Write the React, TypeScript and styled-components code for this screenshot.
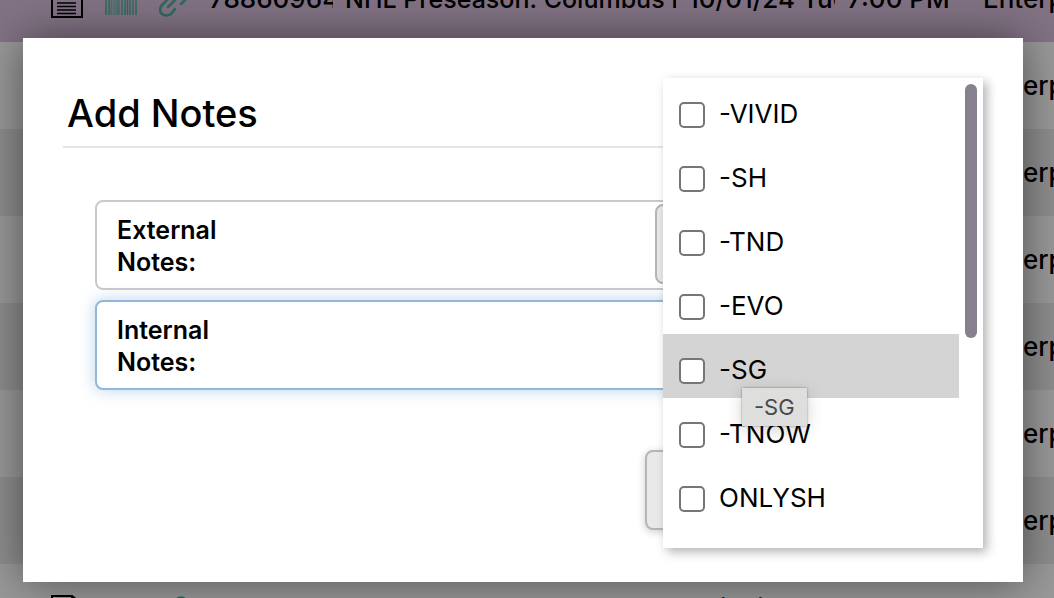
import React from "react";
import styled, { createGlobalStyle, css } from "styled-components";

const Global = createGlobalStyle`
  *, *::before, *::after { box-sizing: border-box; }
  body { margin: 0; background: #999; color: #000; font-family: Inter, "Noto Sans", sans-serif; font-size: 26px; line-height: 32px; overflow: hidden; }
  button, textarea { font: inherit; color: inherit; }
`;

const Page = styled.div`
  position: relative;
  height: 100vh;
  overflow: hidden;
`;

const Orders = styled.table`
  width: 100%;
  min-width: 1054px;
  margin-top: -45px;
  table-layout: fixed;
  border-collapse: collapse;
`;

const OrderRow = styled.tr<{ $selected?: boolean }>`
  height: 87px;
  background: ${(p) => (p.$selected ? "#827384" : "#999")};
  ${(p) => !p.$selected && css`&:nth-child(odd) { background: #8e8e8e; }`}
`;

const Cell = styled.td<{ $width?: number; $small?: boolean }>`
  width: ${(p) => (p.$width ? `${p.$width}px` : "auto")};
  padding: 0 ${(p) => (p.$width ? "12px" : "0")} 0 0;
  vertical-align: middle;
  font-weight: 500;
  font-size: ${(p) => (p.$small ? "25px" : "26px")};
`;

const Clip = styled.div`
  overflow: hidden;
  white-space: nowrap;
`;

const Icons = styled.div`
  display: flex;
  align-items: center;
  gap: 22px;
  padding: 6px 0 0 51px;
  svg { display: block; flex: none; }
`;

const Overlay = styled.div`
  position: absolute;
  inset: 0;
  padding: 38px 31px 16px 23px;
  display: flex;
`;

const Dialog = styled.section`
  position: relative;
  flex: 1;
  padding: 40px;
  background: #fff;
  box-shadow: 0 0 42px rgba(0, 0, 0, 0.48);
`;

const Title = styled.h1`
  margin: 0;
  padding: 10px 4px 8px;
  border-bottom: 2px solid #e5e5e5;
  font-size: 38px;
  line-height: 50px;
  font-weight: 500;
`;

const Form = styled.form`
  display: flex;
  flex-direction: column;
  gap: 10px;
  padding: 52px 32px 0;
`;

const Field = styled.div<{ $active?: boolean }>`
  display: flex;
  height: 90px;
  padding: 2px 2px 2px 20px;
  border: 2px solid ${(p) => (p.$active ? "#8fb8da" : "#c9c9cb")};
  border-radius: 8px;
  background: #fff;
  box-shadow: ${(p) => (p.$active ? "0 0 16px rgba(100, 160, 210, 0.45)" : "none")};
`;

const FieldLabel = styled.label`
  width: 130px;
  padding: 10px 0;
  font-size: 25px;
  font-weight: 600;
`;

const NoteInput = styled.textarea`
  flex: 1;
  min-width: 0;
  border: 0;
  outline: 0;
  resize: none;
  background: transparent;
`;

const GreyButton = styled.button<{ $raised?: boolean }>`
  width: ${(p) => (p.$raised ? "306px" : "292px")};
  height: 80px;
  align-self: ${(p) => (p.$raised ? "flex-end" : "auto")};
  margin-top: ${(p) => (p.$raised ? "50px" : "0")};
  border: 2px solid #b5b5b5;
  border-radius: 8px;
  background: #e9e9e9;
  box-shadow: ${(p) => (p.$raised ? "0 2px 8px rgba(0, 0, 0, 0.2)" : "none")};
`;

const Menu = styled.div`
  position: absolute;
  top: 40px;
  right: 40px;
  width: 320px;
  height: 470px;
  display: flex;
  background: #fff;
  box-shadow: 4px 4px 10px rgba(0, 0, 0, 0.3);
`;

const Options = styled.ul`
  flex: 1;
  margin: 0;
  padding: 0;
  list-style: none;
`;

const Option = styled.li<{ $hover?: boolean }>`
  position: relative;
  height: 64px;
  background: ${(p) => (p.$hover ? "#d4d4d4" : "transparent")};
`;

const OptionLabel = styled.label`
  display: flex;
  gap: 14px;
  padding: 20px 16px 0;
`;

const Tick = styled.input`
  appearance: none;
  width: 26px;
  height: 26px;
  margin: 4px 0 0;
  border: 2px solid #767676;
  border-radius: 5px;
  background: #fff;
`;

const Tooltip = styled.span`
  position: absolute;
  z-index: 1;
  top: 54px;
  left: 79px;
  padding: 3px 12px;
  background: #dededc;
  box-shadow: 0 0 2px rgba(0, 0, 0, 0.4), 0 4px 16px rgba(0, 0, 0, 0.18);
  color: #4a4a4a;
  font-size: 22px;
`;

const ScrollTrack = styled.div`
  width: 24px;
  padding: 6px;
`;

const ScrollThumb = styled.div`
  height: 254px;
  border-radius: 6px;
  background: #86818c;
`;

const NoteIcon = () => (
  <svg width="32" height="32" viewBox="0 0 32 32" fill="none" stroke="#000" strokeWidth="2" aria-hidden="true">
    <path d="M1 1H21L31 9V31H1Z M21 1V9H31" />
    <path d="M6 13H25M6 17H25M6 20.500H25M6 24H25M6 27.500H25" strokeWidth="1.5" />
  </svg>
);

const Barcode = () => (
  <svg width="32" height="26" viewBox="0 0 32 26" stroke="#2c6a5c" aria-hidden="true">
    <path d="M1 0V26M4 0V26M17 0V26M20 0V26M22.500 0V26M25 0V26M28 0V26M31 0V26" strokeWidth="1.4" />
    <path d="M6.500 0V26M9.500 0V26M12 0V26M14 0V26" strokeWidth="2" opacity=".55" />
  </svg>
);

const LinkIcon = () => (
  <svg width="30" height="30" viewBox="0 0 30 30" fill="none" stroke="#2c6a5c" strokeWidth="2.600" strokeLinecap="round" aria-hidden="true">
    <path d="M8 13L3 18Q-1 23 3 27Q7 30 12 27L16 22M9 20L18 11M13 8L18 3Q22 0 26 3Q30 8 27 12L22 17" />
  </svg>
);

const options = ["-VIVID", "-SH", "-TND", "-EVO", "-SG", "-TNOW", "ONLYSH"];

const orders = [
  { id: "78860964", event: "NHL Preseason: Columbus Blue", date: "10/01/24 Tue", time: "7:00 PM" },
  ...Array.from({ length: 6 }, () => ({ id: "", event: "", date: "", time: "" })),
  { id: "78718998", event: "NHL Preseason: Columbus Blue", date: "10/01/24 Tue", time: "7:00 PM" },
];

export default function App() {
  return (
    <Page>
      <Global />
      <Orders>
        <tbody>
          {orders.map((o, i) => (
            <OrderRow key={i} $selected={i === 0}>
              <Cell $width={209}>{o.id && <Icons><NoteIcon /><Barcode /><LinkIcon /></Icons>}</Cell>
              <Cell $width={136}><Clip>{o.id}</Clip></Cell>
              <Cell $width={343} $small><Clip>{o.event}</Clip></Cell>
              <Cell $width={159}><Clip>{o.date}</Clip></Cell>
              <Cell $width={136}><Clip>{o.time}</Clip></Cell>
              <Cell><Clip>Enterprise</Clip></Cell>
            </OrderRow>
          ))}
        </tbody>
      </Orders>
      <Overlay>
        <Dialog role="dialog" aria-labelledby="title">
          <Title id="title">Add Notes</Title>
          <Form>
            <Field>
              <FieldLabel htmlFor="external">External Notes:</FieldLabel>
              <NoteInput id="external" />
              <GreyButton type="button" aria-label="External tags" />
            </Field>
            <Field $active>
              <FieldLabel htmlFor="internal">Internal Notes:</FieldLabel>
              <NoteInput id="internal" />
            </Field>
            <GreyButton type="submit" $raised aria-label="Save" />
          </Form>
          <Menu>
            <Options>
              {options.map((name) => (
                <Option key={name} $hover={name === "-SG"}>
                  <OptionLabel><Tick type="checkbox" />{name}</OptionLabel>
                  {name === "-SG" && <Tooltip role="tooltip">{name}</Tooltip>}
                </Option>
              ))}
            </Options>
            <ScrollTrack><ScrollThumb /></ScrollTrack>
          </Menu>
        </Dialog>
      </Overlay>
    </Page>
  );
}
